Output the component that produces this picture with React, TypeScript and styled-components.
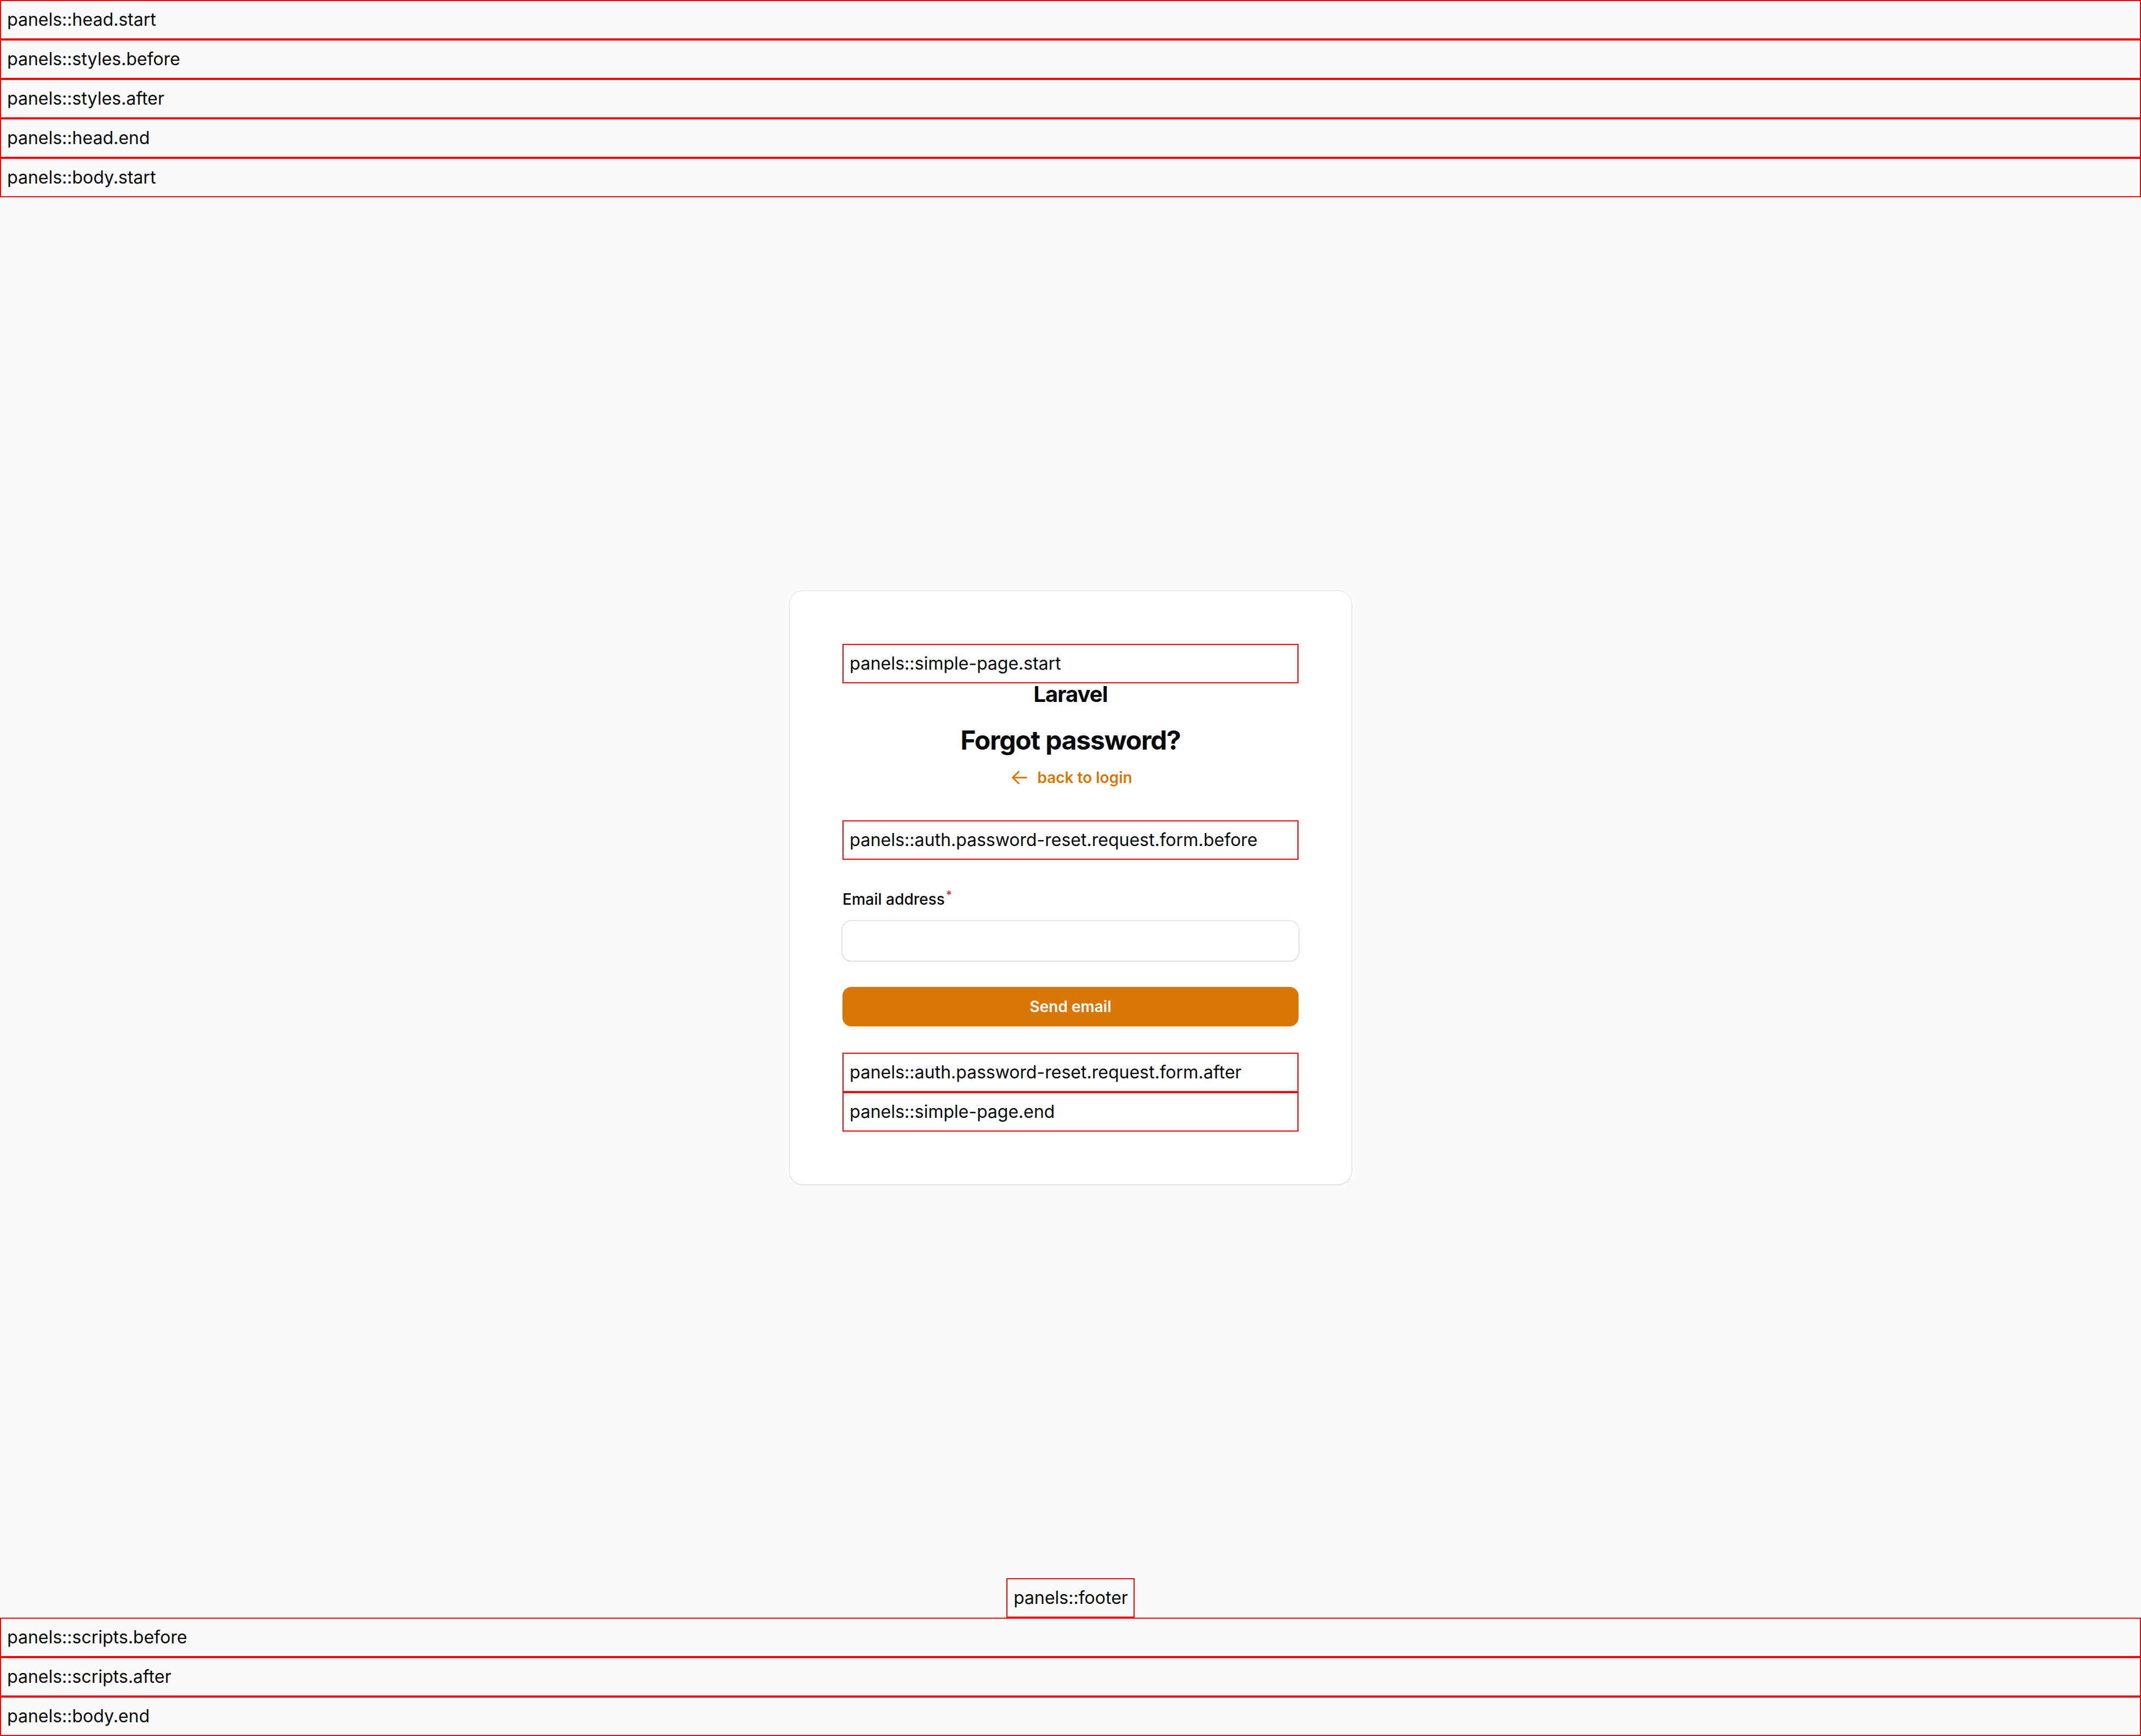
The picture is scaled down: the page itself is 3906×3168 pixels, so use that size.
import React from "react";
import styled, { createGlobalStyle } from "styled-components";

const GlobalStyle = createGlobalStyle`
  *, *::before, *::after { box-sizing: border-box; }
  html, body { margin: 0; padding: 0; }
  body {
    background: #fafafa;
    color: #09090b;
    font-family: Inter, "Noto Sans", "Liberation Sans", sans-serif;
    -webkit-font-smoothing: antialiased;
  }
`;

const Page = styled.div`
  display: flex;
  flex-direction: column;
  width: 3906px;
  min-height: 3168px;
  background: #fafafa;
`;

const Hook = styled.div<{ $inline?: boolean }>`
  border: 2px solid #ff0000;
  padding: 8px 10px 8px 11px;
  font-size: 32px;
  line-height: 52px;
  font-weight: 400;
  color: #09090b;
  white-space: nowrap;
  width: ${(p) => (p.$inline ? "fit-content" : "auto")};
  align-self: ${(p) => (p.$inline ? "center" : "stretch")};
`;

const SimpleLayout = styled.div`
  flex: 1;
  display: flex;
  flex-direction: column;
  align-items: center;
`;

const MainContainer = styled.div`
  flex: 1;
  width: 100%;
  display: flex;
  align-items: center;
  justify-content: center;
`;

const Card = styled.main`
  width: 1024px;
  padding: 96px;
  background: #ffffff;
  border-radius: 24px;
  box-shadow: 0 0 0 2px rgba(9, 9, 11, 0.05), 0 2px 4px 0 rgba(0, 0, 0, 0.05);
`;

const Section = styled.section`
  display: grid;
  grid-auto-columns: minmax(0, 1fr);
  row-gap: 48px;
`;

const Header = styled.header`
  display: flex;
  flex-direction: column;
  align-items: center;
`;

const Brand = styled.div`
  font-size: 40px;
  line-height: 40px;
  font-weight: 700;
  letter-spacing: -1px;
  color: #09090b;
  margin-bottom: 32px;
`;

const Heading = styled.h1`
  margin: 0;
  font-size: 48px;
  line-height: 64px;
  font-weight: 700;
  letter-spacing: -1.2px;
  text-align: center;
  color: #09090b;
`;

const Subheading = styled.div`
  margin-top: 16px;
  height: 50px;
  display: flex;
  justify-content: center;
  align-items: flex-start;
`;

const BackLink = styled.a`
  display: flex;
  align-items: center;
  gap: 12px;
  height: 40px;
  color: #d97706;
  font-size: 28px;
  line-height: 40px;
  font-weight: 600;
  text-decoration: none;
  cursor: pointer;

  svg {
    width: 40px;
    height: 40px;
    flex-shrink: 0;
  }
`;

const Form = styled.form`
  display: grid;
  row-gap: 48px;
`;

const Field = styled.div`
  display: grid;
  row-gap: 16px;
`;

const Label = styled.label`
  font-size: 28px;
  line-height: 48px;
  font-weight: 500;
  color: #09090b;

  sup {
    font-size: 75%;
    line-height: 0;
    position: relative;
    vertical-align: baseline;
    top: -0.5em;
    color: #dc2626;
    font-weight: 500;
    margin-left: 2px;
  }
`;

const InputWrapper = styled.div`
  height: 72px;
  border-radius: 16px;
  background: #ffffff;
  box-shadow: 0 0 0 2px rgba(9, 9, 11, 0.1), 0 2px 4px 0 rgba(0, 0, 0, 0.05);
  display: flex;
  overflow: hidden;
`;

const Input = styled.input`
  flex: 1;
  border: none;
  outline: none;
  background: transparent;
  padding: 12px 24px;
  font-family: inherit;
  font-size: 28px;
  line-height: 48px;
  color: #09090b;
`;

const Button = styled.button`
  height: 72px;
  width: 100%;
  border: none;
  border-radius: 16px;
  background: #d97706;
  color: #ffffff;
  font-family: inherit;
  font-size: 28px;
  line-height: 40px;
  font-weight: 600;
  padding: 16px 24px;
  box-shadow: 0 2px 4px 0 rgba(0, 0, 0, 0.05);
  cursor: pointer;
`;

const ArrowLeft = () => (
  <svg viewBox="0 0 20 20" fill="currentColor" aria-hidden="true">
    <path
      fillRule="evenodd"
      clipRule="evenodd"
      d="M17 10a.75.75 0 01-.75.75H5.612l4.158 3.96a.75.75 0 11-1.04 1.08l-5.5-5.25a.75.75 0 010-1.08l5.5-5.25a.75.75 0 111.04 1.08L5.612 9.25H16.25A.75.75 0 0117 10z"
    />
  </svg>
);

export default function App() {
  return (
    <>
      <GlobalStyle />
      <Page>
        <Hook>panels::head.start</Hook>
        <Hook>panels::styles.before</Hook>
        <Hook>panels::styles.after</Hook>
        <Hook>panels::head.end</Hook>
        <Hook>panels::body.start</Hook>
        <SimpleLayout>
          <MainContainer>
            <Card>
              <Hook>panels::simple-page.start</Hook>
              <Section>
                <Header>
                  <Brand>Laravel</Brand>
                  <Heading>Forgot password?</Heading>
                  <Subheading>
                    <BackLink>
                      <ArrowLeft />
                      <span>back to login</span>
                    </BackLink>
                  </Subheading>
                </Header>
                <Hook>panels::auth.password-reset.request.form.before</Hook>
                <Form onSubmit={(e) => e.preventDefault()}>
                  <Field>
                    <Label htmlFor="email">
                      Email address<sup>*</sup>
                    </Label>
                    <InputWrapper>
                      <Input id="email" type="email" />
                    </InputWrapper>
                  </Field>
                  <Button type="submit">Send email</Button>
                </Form>
                <Hook>panels::auth.password-reset.request.form.after</Hook>
              </Section>
              <Hook>panels::simple-page.end</Hook>
            </Card>
          </MainContainer>
          <Hook $inline>panels::footer</Hook>
        </SimpleLayout>
        <Hook>panels::scripts.before</Hook>
        <Hook>panels::scripts.after</Hook>
        <Hook>panels::body.end</Hook>
      </Page>
    </>
  );
}
